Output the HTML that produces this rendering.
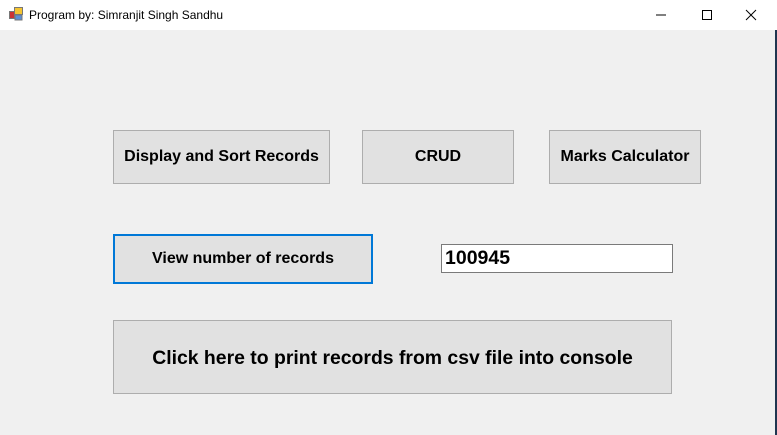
<!DOCTYPE html>
<html><head><meta charset="utf-8"><style>
*{margin:0;padding:0;box-sizing:border-box}
body{width:777px;height:435px;background:#f0f0f0;position:relative;overflow:hidden;font-family:"Liberation Sans",Arial,sans-serif}
.tb{position:absolute;left:0;top:0;width:777px;height:30px;background:#fff}
.title{position:absolute;left:29px;top:8px;font-size:12px;color:#000}
.btn{position:absolute;background:#e1e1e1;border:1px solid #adadad;display:flex;align-items:center;justify-content:center;font-weight:bold;color:#000}
.edge{position:absolute;left:775px;top:30px;width:2px;height:405px;background:#1f3550}
</style></head><body>
<div class="tb">
<svg style="position:absolute;left:9px;top:7px" width="14" height="14" viewBox="0 0 14 14">
<rect x="0.5" y="4.5" width="5" height="7" fill="#c33" stroke="#777"/>
<rect x="5.5" y="0.5" width="8" height="7" fill="#f4c430" stroke="#777"/>
<rect x="6" y="8" width="7" height="5" fill="#5b8fd6" stroke="#777"/>
</svg>
<div class="title">Program by: Simranjit Singh Sandhu</div>
<svg style="position:absolute;left:650px;top:8px" width="110" height="14">
<line x1="6" y1="7" x2="16" y2="7" stroke="#000" stroke-width="1"/>
<rect x="52.5" y="2.5" width="9" height="9" fill="none" stroke="#000"/>
<line x1="96" y1="2" x2="106" y2="12" stroke="#000"/>
<line x1="106" y1="2" x2="96" y2="12" stroke="#000"/>
</svg>
</div>
<div class="edge"></div>
<div class="btn" style="left:113px;top:130px;width:217px;height:54px;font-size:16px">Display and Sort Records</div>
<div class="btn" style="left:362px;top:130px;width:152px;height:54px;font-size:16px">CRUD</div>
<div class="btn" style="left:549px;top:130px;width:152px;height:54px;font-size:16px">Marks Calculator</div>
<div class="btn" style="left:113px;top:234px;width:260px;height:50px;font-size:16px;border:2px solid #0078d7">View number of records</div>
<div style="position:absolute;left:441px;top:244px;width:232px;height:29px;background:#fff;border:1px solid #7a7a7a;font-weight:bold;font-size:19.5px;padding-left:3px;line-height:27px">100945</div>
<div class="btn" style="left:113px;top:320px;width:559px;height:74px;font-size:19.4px;padding-top:3px">Click here to print records from csv file into console</div>
</body></html>
